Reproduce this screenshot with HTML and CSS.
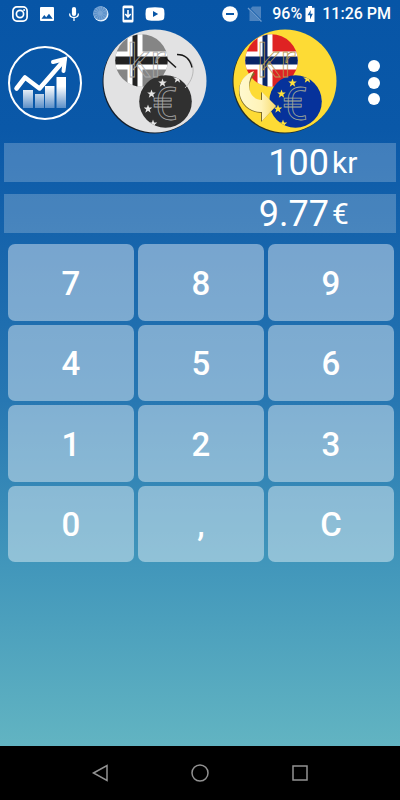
FILE: index.html
```
<!DOCTYPE html>
<html lang="en">
<head>
<meta charset="utf-8">
<meta name="viewport" content="width=device-width, initial-scale=1">
<title>Currency converter</title>
<link rel="stylesheet" href="styles.css">
</head>
<body>
<div class="status">
  <div class="status-left">
    <svg width="20" height="20" viewBox="0 0 20 20" fill="none" stroke="#fff" stroke-width="1.7"><rect x="2.9" y="2.9" width="14.2" height="14.2" rx="4"/><circle cx="10" cy="10" r="3.6"/><circle cx="14.1" cy="5.9" r="1" fill="#fff" stroke="none"/></svg>
    <svg width="20" height="20" viewBox="0 0 20 20"><path fill="#fff" fill-rule="evenodd" d="M4 3h12q1 0 1 1v12q0 1-1 1H4q-1 0-1-1V4q0-1 1-1zM4.500 14.800h11.200L12 9.700 9.200 13.300 7.300 11z"/></svg>
    <svg width="20" height="20" viewBox="0 0 20 20"><rect x="7.900" y="3" width="4.200" height="9" rx="2.100" fill="#fff"/><path d="M5.600 9.500q0 4 4.400 4t4.400-4M10 13.500V17" fill="none" stroke="#fff" stroke-width="1.300"/></svg>
    <svg width="20" height="20" viewBox="0 0 20 20"><circle cx="10" cy="10" r="7.500" fill="#e9f4ff"/><circle cx="9.300" cy="9.300" r="7" fill="#78a5d5"/><circle cx="9.300" cy="9.300" r="4.500" fill="none" stroke="#5a90ca" stroke-width="4" stroke-dasharray="1 1"/></svg>
    <svg width="20" height="20" viewBox="0 0 20 20"><path fill="#fff" fill-rule="evenodd" d="M6 1.500h8q1.500 0 1.500 1.500v14q0 1.500-1.500 1.500H6q-1.500 0-1.500-1.500V3q0-1.500 1.500-1.500zM6.200 4.300v11.400h7.600V4.300z"/><path d="M10 6v6M7.300 10l2.700 3 2.700-3" fill="none" stroke="#fff" stroke-width="1.600"/></svg>
    <svg width="20" height="20" viewBox="0 0 20 20"><path fill="#fff" fill-rule="evenodd" d="M3 3.800q7-1 14 0 2 .2 2.200 2.200.6 4 0 8-.2 2-2.200 2.200-7 1-14 0-2-.2-2.200-2.200-.6-4 0-8Q1 4 3 3.800zM8 7v6l5.200-3z"/></svg>
  </div>
  <div class="status-right">
    <svg width="16" height="20" viewBox="0 0 16 20"><circle cx="8" cy="10" r="7.800" fill="#fff"/><path d="M4 10h8" stroke="#0a57a7" stroke-width="2"/></svg>
    <svg width="16" height="20" viewBox="0 0 16 20"><path fill="#4d83be" d="M5.500 2.500H14V15L3.500 4.500zM2.500 6.500L13 17H2.500z"/><path d="M1 4l13.500 13.500" stroke="#6c99cb" stroke-width="1.300"/></svg>
    <span>96%</span>
    <svg class="battery" width="10" height="20" viewBox="0 0 10 20"><path d="M3 2h4v1.800h2.500V18h-9V3.800H3z" fill="#fff"/><path d="M5.800 6L2.500 11.300H5V15.500L7.800 9.800H5.500z" fill="#0a57a7"/></svg>
    <span>11:26 PM</span>
  </div>
</div>
<main class="app">
  <header class="toolbar">
    <button class="tool" type="button" aria-label="Rate chart">
      <svg width="76" height="76" viewBox="0 0 76 76">
        <defs><linearGradient id="bar" x1="0" y1="0" x2="0" y2="1"><stop offset=".3" stop-color="#fff"/><stop offset="1" stop-color="#5c90c8"/></linearGradient></defs>
        <circle cx="38" cy="38" r="36" fill="none" stroke="#fff" stroke-width="2"/>
        <path fill="url(#bar)" d="M16 45h10v18H16zM28 49h9v14H28zM38 41h9.500v22H38zM49.500 32H59v31h-9.500z"/>
        <path d="M9.500 43.500l8.500-11 14.500 11L57 15.500" fill="none" stroke="#fff" stroke-width="4.500" stroke-linecap="round" stroke-linejoin="round"/>
        <path d="M46 17l12-3-1.500 12" fill="none" stroke="#fff" stroke-width="4" stroke-linecap="round"/>
      </svg>
    </button>
    <button class="tool coin" type="button" aria-label="Euro to krone">
      <svg width="114" height="106" viewBox="0 4 114 106">
        <defs>
          <clipPath id="flag"><circle cx="43.500" cy="36.500" r="26.300"/></clipPath>
          <clipPath id="eu"><circle cx="67.500" cy="77.500" r="26.300"/></clipPath>
          <path id="star" d="M0-4.500L1.100-1.400 4.300-1.400 1.800.6 2.700 3.700 0 1.800-2.700 3.700-1.800.6-4.300-1.400-1.100-1.400z"/>
        </defs>
        <circle cx="56" cy="58" r="51.500" fill="#15202d"/>
        <circle cx="57" cy="57" r="51.500" fill="#e2e2e3"/>
        <g clip-path="url(#flag)"><path fill="#858585" d="M17 10h54v54H17z"/><path fill="#fff" d="M29.500 10h15v54h-15zM17 27.500h54v18H17z"/><path fill="#222" d="M34.500 10h5v54h-5zM17 32.500h54v8H17z"/></g>
        <circle cx="67.500" cy="77.500" r="26.300" fill="#303030"/>
        <g fill="#e5e5e5" clip-path="url(#eu)"><use href="#star" x="64.500" y="59"/><use href="#star" x="53.500" y="70"/><use href="#star" x="50" y="85"/><use href="#star" x="79.500" y="55"/><use href="#star" x="55" y="100"/></g>
        <path d="M79 30.500C96 30 101 50 87 64" fill="none" stroke="#b8b8b8"/><path d="M79 30.500q12 0 15 13" fill="none" stroke="#161616" stroke-width="1.300"/><path d="M67 33.500l11 10" fill="none" stroke="#181818" stroke-width="1.500"/>
        <text class="coin-kr grey-line" x="29" y="53">kr</text><text class="coin-euro grey-line" x="54" y="96">€</text>
      </svg>
    </button>
    <button class="tool coin" type="button" aria-label="Krone to euro">
      <svg width="114" height="106" viewBox="0 4 114 106">
        <defs><linearGradient id="arrow"><stop stop-color="#fff9cf"/><stop offset=".6" stop-color="#fff3b8"/><stop offset="1" stop-color="#f8dc70"/></linearGradient></defs>
        <circle cx="56" cy="58" r="51.500" fill="#24302b"/>
        <circle cx="57" cy="57" r="51.500" fill="#fddb35"/>
        <g clip-path="url(#flag)"><path fill="#df2323" d="M17 10h54v54H17z"/><path fill="#fff" d="M29.500 10h15v54h-15zM17 27.500h54v18H17z"/><path fill="#082567" d="M34.500 10h5v54h-5zM17 32.500h54v8H17z"/></g>
        <circle cx="67.500" cy="77.500" r="26.300" fill="#06329b"/>
        <g fill="#ffe13b" clip-path="url(#eu)"><use href="#star" x="64.500" y="59"/><use href="#star" x="53.500" y="70"/><use href="#star" x="50" y="85"/><use href="#star" x="79.500" y="55"/><use href="#star" x="55" y="100"/></g>
        <path d="M25 48C2 57 9 88 33 89v9l15-16-15-14v9C21 77 17 60 27 50" fill="#7c6c2a"/>
        <path d="M26 47C1 56 11 89 34 88v9l14-15-14-14v8C21 76 17 60 26 47z" fill="url(#arrow)"/>
        <text class="coin-kr gold-line" x="29" y="53">kr</text><text class="coin-euro pale-line" x="54" y="96">€</text>
      </svg>
    </button>
    <button class="tool more" type="button" aria-label="More options">
      <svg width="14" height="48" viewBox="0 0 14 48" fill="#fff"><circle cx="7" cy="7" r="6"/><circle cx="7" cy="24" r="6"/><circle cx="7" cy="40" r="6"/></svg>
    </button>
  </header>
  <section class="displays">
    <div class="display"><output class="amount">100</output><span class="unit">kr</span></div>
    <div class="display"><output class="amount">9.77</output><span class="unit">€</span></div>
  </section>
  <section class="keys">
    <button type="button">7</button><button type="button">8</button><button type="button">9</button>
    <button type="button">4</button><button type="button">5</button><button type="button">6</button>
    <button type="button">1</button><button type="button">2</button><button type="button">3</button>
    <button type="button">0</button><button type="button">,</button><button type="button">C</button>
  </section>
</main>
<nav class="system-nav">
  <button type="button" aria-label="Back"><svg width="20" height="20" viewBox="0 0 20 20"><path d="M3.500 10L17 2.500v15z"/></svg></button>
  <button type="button" aria-label="Home"><svg width="20" height="20" viewBox="0 0 20 20"><circle cx="10" cy="10" r="8"/></svg></button>
  <button type="button" aria-label="Recent apps"><svg width="20" height="20" viewBox="0 0 20 20"><path d="M3 3h14v14H3z"/></svg></button>
</nav>
</body>
</html>
```
FILE: styles.css
```
* {
  box-sizing: border-box;
}

body {
  margin: 0;
  min-height: 100vh;
  display: flex;
  flex-direction: column;
  font-family: Roboto, "Liberation Sans", sans-serif;
  color: #fff;
  background: linear-gradient(#0755a6 0, #0a58a8 16%, #1765ac 31%, #2777b2 50%, #4297bb 71%, #63b5c2 94%);
}

button {
  margin: 0;
  padding: 0;
  border: 0;
  background: none;
  color: inherit;
  font: inherit;
}

svg {
  display: block;
  flex: none;
}

.status {
  height: 28px;
  padding: 0 9px 0 10px;
  display: flex;
  justify-content: space-between;
  align-items: center;
  font-size: 16px;
  font-weight: 500;
  line-height: 20px;
}

.status-left,
.status-right {
  display: flex;
  align-items: center;
}

.status-left {
  gap: 7px;
}

.status-right {
  gap: 9px;
}

.battery {
  margin: 0 -2px 0 -6px;
}

.app {
  flex: 1;
}

.toolbar {
  height: 110px;
  padding: 0 19px 0 7px;
  display: grid;
  grid-template-columns: 91fr 130fr 114fr 39fr;
  align-items: center;
}

.tool {
  justify-self: start;
}

.coin {
  align-self: start;
}

.more {
  justify-self: end;
}

.coin-kr,
.coin-euro {
  font-family: Roboto, sans-serif;
  font-size: 46px;
  fill: none;
  stroke-width: 0.8;
}

.grey-line {
  stroke: #aaa;
}

.gold-line {
  stroke: #b69a55;
}

.pale-line {
  stroke: #a3aa98;
}

.displays {
  padding: 5px 4px 0;
  display: grid;
  gap: 12px;
}

.display {
  height: 39px;
  display: flex;
  justify-content: flex-end;
  align-items: center;
  background: rgba(255, 255, 255, 0.22);
}

.amount {
  font-size: 36px;
  line-height: 40px;
}

.unit {
  width: 64px;
  margin-left: 3px;
  font-size: 30px;
  line-height: 40px;
}

.keys {
  height: 330px;
  padding: 11px 6px 1px 8px;
  display: grid;
  grid-template-columns: repeat(3, 1fr);
  grid-template-rows: repeat(4, 1fr);
  gap: 4px;
}

.keys button {
  padding-top: 2px;
  border-radius: 7px;
  background: rgba(255, 255, 255, 0.42);
  font-size: 33px;
  font-weight: 500;
}

.system-nav {
  height: 54px;
  padding: 0 50px;
  display: grid;
  grid-template-columns: repeat(3, 1fr);
  background: #000;
}

.system-nav button {
  display: flex;
  align-items: center;
  justify-content: center;
}

.system-nav svg {
  fill: none;
  stroke: #929292;
  stroke-width: 1.5;
}
```
